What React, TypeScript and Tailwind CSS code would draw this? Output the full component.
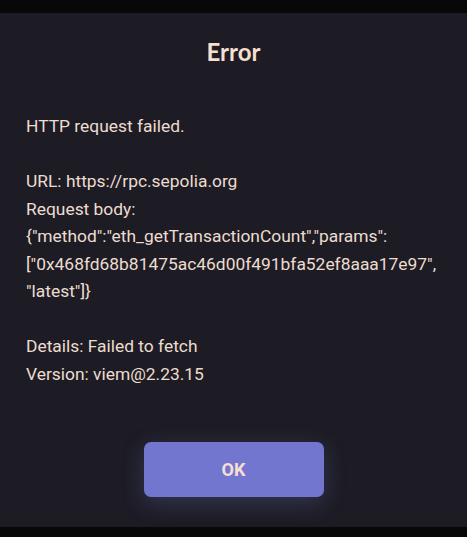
import React from 'react';

const lines = [
  'HTTP request failed.',
  '',
  'URL: https://rpc.sepolia.org',
  'Request body:',
  '{"method":"eth_getTransactionCount","params":',
  '["0x468fd68b81475ac46d00f491bfa52ef8aaa17e97",',
  '"latest"]}',
  '',
  'Details: Failed to fetch',
  'Version: viem@2.23.15',
];

const App: React.FC = () => {
  return (
    <div className="h-[537px] w-[467px] bg-[#080808] pt-[13px] pb-[10px]">
      <div className="flex h-full flex-col bg-[#1d1c25] px-[26px] pb-[30px]">
        {/* Title */}
        <h1 className="mt-[24px] text-center font-['Lato',sans-serif] text-[24px] leading-[30px] font-bold text-[#f6dfd0]">
          Error
        </h1>

        {/* Message */}
        <div className="mt-[46px] font-['Roboto',sans-serif] text-[17.4px] leading-[27.5px] text-[#ecdccf]">
          {lines.map((line, i) => (
            <div key={i} className="h-[27.5px] whitespace-pre">
              {line}
            </div>
          ))}
        </div>

        {/* Action */}
        <div className="mt-auto flex justify-center">
          <button className="h-[55px] w-[180px] rounded-[7px] bg-[#7376cf] font-['Roboto',sans-serif] text-[18px] font-bold text-[#f6dfd0] shadow-[0_6px_22px_rgba(115,118,207,0.28)]">
            OK
          </button>
        </div>
      </div>
    </div>
  );
};

export default App;
